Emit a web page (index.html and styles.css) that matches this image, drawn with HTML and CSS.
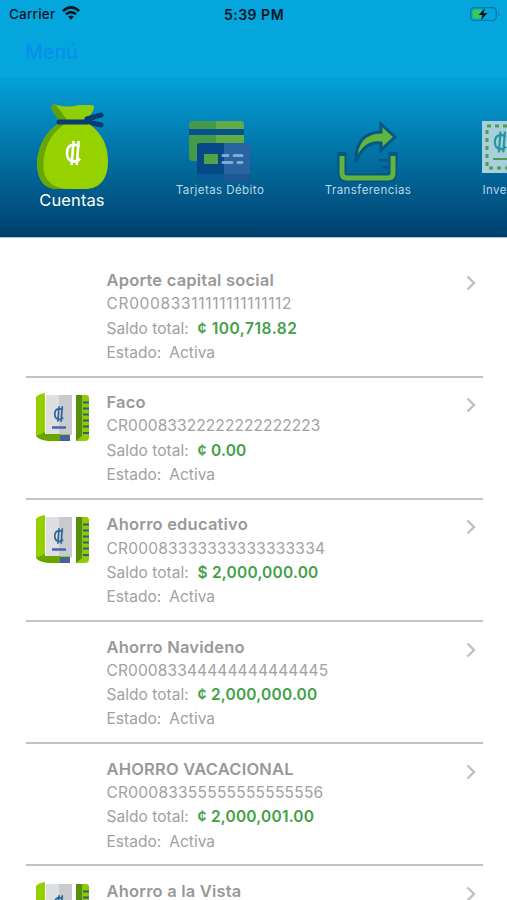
FILE: index.html
```html
<!DOCTYPE html>
<html lang="es">
<head>
<meta charset="utf-8">
<title>Cuentas</title>
<link rel="stylesheet" href="styles.css">
</head>
<body>
<svg class="defs" width="0" height="0">
  <symbol id="colon" viewBox="0 0 20 30">
    <path d="M16.500 8.500Q14 6 10.500 6Q3 6.500 3 15T10.500 24Q14.500 24 17 21M10 2L8 28M15.500 2L13.500 28" fill="none" stroke="currentColor" stroke-width="2.800"/>
  </symbol>
  <symbol id="book" viewBox="0 0 54 50">
    <path d="M10 2H36V42H10z" fill="#dedfe1"/>
    <path d="M23 2H36V42H23z" fill="#c9cacd"/>
    <path d="M0 4Q2 1 9 0V41H34V48H13Q3 47 0 43z" fill="#96cf00"/>
    <path d="M0 43L9 39V41H24V48H13Q3 47 0 43z" fill="#68a500"/>
    <path d="M24 42H34V48H24z" fill="#4561a5"/>
    <path d="M40 2H50Q53 2 53 5V44Q53 48 49 48H40z" fill="#91ca05"/>
    <path d="M40 2H46V43L40 48z" fill="#568e0b"/>
    <path d="M47 9.500H53M47 15.500H53M47 21.500H53M47 27.500H53M47 33.500H53M47 40H53" stroke="#285f83" stroke-width="2.200"/>
    <path d="M16 34.500H30" stroke="#4964a6" stroke-width="2.500"/>
    <use href="#colon" x="15" y="12" width="16" height="18" color="#2c6598"/>
  </symbol>
  <symbol id="chevron" viewBox="0 0 10 16">
    <path d="M1.500 1.500L8 8L1.500 14.500" fill="none" stroke="#c0c0c0" stroke-width="2.400"/>
  </symbol>
</svg>
<div class="screen">
  <header class="top">
    <div class="status">
      <span class="carrier">Carrier</span>
      <svg class="wifi" viewBox="0 0 18 14">
        <g fill="none" stroke="#04151d" stroke-width="2.600"><path d="M.9 5.100Q9-2.300 17.100 5.100"/><path d="M3.900 8.300Q9 3.900 14.100 8.300"/></g>
        <path d="M6.200 10.700Q9 8.500 11.800 10.700L9 13.700z" fill="#04151d"/>
      </svg>
      <span class="clock">5:39 PM</span>
      <svg class="battery" viewBox="0 0 30 14">
        <rect x=".7" y=".7" width="25.600" height="12.600" rx="3.500" fill="none" stroke="#0878a4" stroke-width="1.300"/>
        <path d="M28 5Q30 7 28 9z" fill="#0878a4"/>
        <path d="M4 2.500H11V11.500H4Q2.500 11.500 2.500 10V4Q2.500 2.500 4 2.500z" fill="#35cc58"/>
        <path d="M15 1L8.700 8H12.500L11 13L17.500 6H13.500z" fill="#04151d"/>
      </svg>
    </div>
    <div class="nav"><span>Menú</span></div>
  </header>
  <nav class="carousel">
    <div class="tile active">
      <svg class="bag" viewBox="0 0 74 86">
        <path d="M15 3Q16-1 21 1Q31 4 43 1H55Q60 1 57 7L51 16H23Q17 9 15 3z" fill="#8fce08"/>
        <path d="M15 3Q16-1 20 1L31 16H23Q17 9 15 3z" fill="#609f08"/>
        <path d="M51 15L65 11M51 18L65 21" stroke="#073d72" stroke-width="5" stroke-linecap="round"/>
        <path d="M23 19H52Q72 33 72 57C72 77 62 85 49 85H22C8 85 1 76 1 57Q4 32 23 19z" fill="#96d100"/>
        <path d="M23 19H30Q11 32 8 53C5 73 13 83 30 85H22C8 85 1 76 1 57Q4 32 23 19z" fill="#68a604"/>
        <path d="M23 18H52" stroke="#073d72" stroke-width="5" stroke-linecap="round"/>
        <use href="#colon" x="28" y="35" width="19" height="28" color="#fff"/>
      </svg>
      <span>Cuentas</span>
    </div>
    <div class="tile">
      <svg class="cards" viewBox="0 0 62 62">
        <path d="M4 0H28V40H4Q0 40 0 36V4Q0 0 4 0z" fill="#469948"/>
        <path d="M27 0H51Q55 0 55 4V40H27z" fill="#62ac46"/>
        <path d="M0 8H55V14H0z" fill="#07518d"/>
        <path d="M11 22H35V61H12Q8 61 8 57V25Q8 22 11 22z" fill="#064986"/>
        <path d="M35 22H58Q61 22 61 25V57Q61 61 57 61H35z" fill="#28649f"/>
        <path d="M8 53H35V61H12Q8 61 8 57z" fill="#075a92"/>
        <path d="M35 53H61V57Q61 61 57 61H35z" fill="#1c5793"/>
        <rect x="15" y="33" width="14" height="10" fill="#54a146"/>
        <path d="M34 34.500H39M45 34.500H53M34 41.500H43M49 41.500H53" stroke="#7daccf" stroke-width="3" stroke-linecap="round"/>
      </svg>
      <span>Tarjetas Débito</span>
    </div>
    <div class="tile">
      <svg class="share" viewBox="0 0 62 62">
        <path d="M5 31V52Q5 57 10 57H51Q56 57 56 52V31" fill="none" stroke="#095683" stroke-width="9"/>
        <path d="M5 35V52Q5 57 10 57H51Q56 57 56 52V35" fill="none" stroke="#61b53e" stroke-width="5"/>
        <path d="M44 3L58 16L44 29V22Q27 20 19 41Q18 12 44 11z" fill="#61b53e" stroke="#095683" stroke-width="3"/>
        <path d="M42 39H51M45 46H51" stroke="#095683" stroke-width="2.500"/>
      </svg>
      <span>Transferencias</span>
    </div>
    <div class="tile">
      <svg class="bond" viewBox="0 0 68 52">
        <path d="M0 0H68V52H0z" fill="#a8d0dc"/>
        <rect x="5" y="5" width="58" height="42" fill="none" stroke="#549a55" stroke-width="3" stroke-dasharray="4 4"/>
        <path d="M11 38H57" stroke="#519b52" stroke-width="2"/>
        <use href="#colon" x="10" y="9" width="17" height="24" color="#2795a0"/>
      </svg>
      <span>Inversiones</span>
    </div>
  </nav>
  <main class="accounts">
    <section class="row">
      <div class="thumb"></div>
      <div class="info"><h2>Aporte capital social</h2><p class="n1">CR00083311111111111112</p><p>Saldo total: <b class="wide">¢ 100,718.82</b></p><p>Estado: <i>Activa</i></p></div>
      <svg class="go"><use href="#chevron"/></svg>
    </section>
    <section class="row">
      <div class="thumb"><svg><use href="#book"/></svg></div>
      <div class="info"><h2>Faco</h2><p class="n2">CR00083322222222222223</p><p>Saldo total: <b>¢ 0.00</b></p><p>Estado: <i>Activa</i></p></div>
      <svg class="go"><use href="#chevron"/></svg>
    </section>
    <section class="row">
      <div class="thumb"><svg><use href="#book"/></svg></div>
      <div class="info"><h2>Ahorro educativo</h2><p class="n3">CR00083333333333333334</p><p>Saldo total: <b>$ 2,000,000.00</b></p><p>Estado: <i>Activa</i></p></div>
      <svg class="go"><use href="#chevron"/></svg>
    </section>
    <section class="row">
      <div class="thumb"></div>
      <div class="info"><h2>Ahorro Navideno</h2><p class="n4">CR00083344444444444445</p><p>Saldo total: <b>¢ 2,000,000.00</b></p><p>Estado: <i>Activa</i></p></div>
      <svg class="go"><use href="#chevron"/></svg>
    </section>
    <section class="row">
      <div class="thumb"></div>
      <div class="info"><h2>AHORRO VACACIONAL</h2><p class="n5">CR00083355555555555556</p><p>Saldo total: <b>¢ 2,000,001.00</b></p><p>Estado: <i>Activa</i></p></div>
      <svg class="go"><use href="#chevron"/></svg>
    </section>
    <section class="row">
      <div class="thumb"><svg><use href="#book"/></svg></div>
      <div class="info"><h2>Ahorro a la Vista</h2></div>
      <svg class="go"><use href="#chevron"/></svg>
    </section>
  </main>
</div>
</body>
</html>
```
FILE: styles.css
```css
* { box-sizing: border-box; }
body { margin: 0; background: #fff; font-family: Inter, "Liberation Sans", sans-serif; }
.defs { position: absolute; }
.screen { width: 507px; height: 900px; overflow: hidden; display: flex; flex-direction: column; }
.top { height: 79px; flex: none; background: #05a5dd; border-bottom: 1px solid #059bd1; }
.status { height: 27px; display: grid; grid-template-columns: 47px 1fr auto 1fr; align-items: center; padding: 1px 7px 0 9px; color: #04151d; }
.carrier { font-size: 13.500px; font-weight: 500; letter-spacing: .2px; }
.wifi { width: 18px; height: 14px; margin-left: 6px; margin-top: -2px; }
.clock { font-size: 14px; font-weight: 600; letter-spacing: .5px; margin-left: -48px; }
.battery { width: 30px; height: 14px; justify-self: end; margin-top: -1px; }
.nav { padding-left: 25px; height: 50px; display: flex; align-items: center; font-size: 19.800px; color: #078cf0; }
.carousel { height: 159px; flex: none; display: flex; background: linear-gradient(#04a0d7, #003f6d); border-bottom: 1px solid #a6c4d6; overflow: hidden; }
.tile { width: 148px; flex: none; display: flex; flex-direction: column; align-items: center; color: #bdd8e8; font-size: 11.500px; letter-spacing: .43px; line-height: 14px; }
.tile:first-child { margin-left: -2px; }
.tile svg { flex: none; }
.tile.active { color: #fff; font-size: 16.500px; letter-spacing: .1px; line-height: 21px; }
.bag { width: 74px; height: 86px; margin-top: 25px; margin-left: 2px; }
.cards, .share { width: 62px; height: 62px; margin-top: 42px; }
.bond { width: 68px; height: 52px; margin: 42px 0 10px; }
.accounts { padding: 17.500px 24.500px 0 25.500px; }
.row { height: 122.200px; display: grid; grid-template-columns: 81px 1fr 17px; border-bottom: 2px solid #c2c2c2; padding-top: 12.500px; }
.thumb svg { display: block; width: 54px; height: 50px; margin: 3px 0 0 10px; }
.info { color: #a1a1a1; font-size: 15.500px; line-height: 24.300px; white-space: nowrap; }
.info h2, .info p { margin: 0; font-size: inherit; }
.info h2 { color: #999; font-size: 16.500px; font-weight: 600; letter-spacing: .2px; }
.info p { letter-spacing: .03px; }
.info .n1 { letter-spacing: .68px; }
.info .n2 { letter-spacing: .1px; }
.info .n3 { letter-spacing: .22px; }
.info .n4 { letter-spacing: .13px; }
.info .n5 { letter-spacing: .25px; }
.info b { color: #43a047; font-weight: 600; margin-left: 4.500px; letter-spacing: .2px; }
.info .wide { letter-spacing: .55px; }
.info i { font-style: normal; margin-left: 3.500px; }
.go { width: 10px; height: 16px; margin-top: 7px; }
```
